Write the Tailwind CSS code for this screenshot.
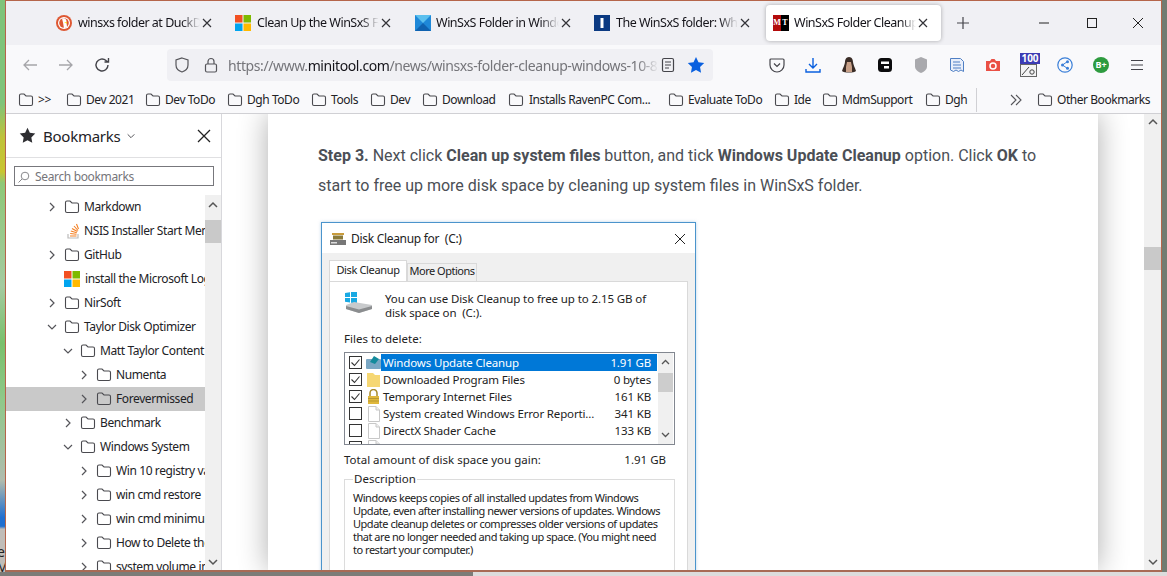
<!DOCTYPE html>
<html lang="en">
  <head>
    <meta charset="UTF-8" />
    <title>WinSxS Folder Cleanup</title>
    <script src="https://cdn.jsdelivr.net/npm/@tailwindcss/browser@4"></script>
  </head>
  <body class="h-screen overflow-hidden bg-[#8a8f88] font-['Noto_Sans',sans-serif] text-[12px] text-[#15141a]">
    <svg class="hidden">
      <symbol id="folder" viewBox="0 0 16 16"><path d="M1.500 3.500a1.500 1.500 0 0 1 1.500-1.500h3l2 2h5a1.500 1.500 0 0 1 1.500 1.500v6.500a1.500 1.500 0 0 1-1.500 1.500h-10a1.500 1.500 0 0 1-1.500-1.500z" fill="none" stroke="#4a4a4f" stroke-width="1.100"/></symbol>
      <symbol id="right" viewBox="0 0 12 12"><path d="M4 2l4 4-4 4" fill="none" stroke="#55555a" stroke-width="1.200"/></symbol>
      <symbol id="down" viewBox="0 0 12 12"><path d="M2 4l4 4 4-4" fill="none" stroke="#55555a" stroke-width="1.200"/></symbol>
      <symbol id="close" viewBox="0 0 12 12"><path d="M2 2l8 8M10 2l-8 8" fill="none" stroke="#333338" stroke-width="1.200"/></symbol>
      <symbol id="ms" viewBox="0 0 16 16"><rect width="7.500" height="7.500" fill="#f25022"/><rect x="8.500" width="7.500" height="7.500" fill="#7fba00"/><rect y="8.500" width="7.500" height="7.500" fill="#00a4ef"/><rect x="8.500" y="8.500" width="7.500" height="7.500" fill="#ffb900"/></symbol>
      <symbol id="check" viewBox="0 0 13 13"><rect x=".5" y=".5" width="12" height="12" fill="#fff" stroke="#333"/><path d="M2.500 6.500l3 3 5-6" fill="none" stroke="#333" stroke-width="1.100"/></symbol>
      <symbol id="uncheck" viewBox="0 0 13 13"><rect x=".5" y=".5" width="12" height="12" fill="#fff" stroke="#333"/></symbol>
      <symbol id="page" viewBox="0 0 14 16"><path d="M1.500.5h7.500l3.500 3.500v11.500h-11z" fill="#fff" stroke="#c8c8c8"/><path d="M9 .5v3.500h3.500" fill="#eee" stroke="#c8c8c8"/></symbol>
    </svg>

    <div class="flex h-[572px]">
      <!-- desktop showing behind the browser -->
      <div class="relative w-[5px] shrink-0 overflow-hidden bg-[linear-gradient(180deg,#7fc47a_0,#7fc47a_18%,#bfc23a_24%,#c9c530_30%,#8ec878_32%,#a4cba0_50%,#79c06c_60%,#8fc98a_70%,#b0bcae_84%,#1f6fd0_90.5%,#1f6fd0_92%,#c0bdb8_92.5%,#c0bdb8_100%)] text-[14px] text-[#222]">
        <span class="absolute top-[541px] -left-[3px]">e</span>
        <span class="absolute top-[556px] -left-[4px]">M</span>
      </div>

      <div class="flex min-w-0 flex-1 flex-col border border-b-2 border-[#b5654a] border-b-[#a86a55] bg-white">
        <!-- tab strip -->
        <div class="flex h-[44px] shrink-0 items-center bg-[#f0f0f4] pl-[42px]">
          <div class="flex h-[36px] w-[179px] shrink-0 items-center pl-[8px]">
            <svg class="h-4 w-4 shrink-0" viewBox="0 0 16 16"><circle cx="8" cy="8" r="8" fill="#de5833"/><circle cx="8" cy="8" r="6" fill="#fff"/><circle cx="8" cy="8" r="4.800" fill="#de5833"/><path d="M6 3.500c3-1 5 1 4.500 4l.5 4.500-3 1.500-1-6z" fill="#fff"/><path d="M8 7.500l3-.5v1.500z" fill="#fd0"/></svg>
            <span class="ml-[6px] w-[122px] overflow-hidden pt-px text-[12.5px] tracking-[-0.5px] whitespace-nowrap [mask-image:linear-gradient(90deg,#000_85%,transparent)]">winsxs folder at DuckDuckGo</span>
            <svg class="ml-[1px] h-3 w-3 shrink-0"><use href="#close"/></svg>
          </div>
          <div class="flex h-[36px] w-[179px] shrink-0 items-center pl-[8px]">
            <svg class="h-4 w-4 shrink-0"><use href="#ms"/></svg>
            <span class="ml-[6px] w-[122px] overflow-hidden pt-px text-[12.5px] tracking-[-0.5px] whitespace-nowrap [mask-image:linear-gradient(90deg,#000_85%,transparent)]">Clean Up the WinSxS Folder</span>
            <svg class="ml-[1px] h-3 w-3 shrink-0"><use href="#close"/></svg>
          </div>
          <div class="ml-[1px] flex h-[36px] w-[179px] shrink-0 items-center pl-[8px]">
            <svg class="h-4 w-4 shrink-0" viewBox="0 0 16 16"><rect width="16" height="16" fill="#1e88d8"/><path d="M0 0l8 8 8-8z" fill="#5cc0ee"/><path d="M0 16l8-8 8 8z" fill="#0f62b0"/></svg>
            <span class="ml-[5px] w-[123px] overflow-hidden pt-px text-[12.5px] tracking-[-0.5px] whitespace-nowrap [mask-image:linear-gradient(90deg,#000_85%,transparent)]">WinSxS Folder in Windows</span>
            <svg class="ml-[1px] h-3 w-3 shrink-0"><use href="#close"/></svg>
          </div>
          <div class="flex h-[36px] w-[179px] shrink-0 items-center pl-[8px]">
            <svg class="h-4 w-4 shrink-0" viewBox="0 0 16 16"><rect width="16" height="16" fill="#0b3a82"/><rect x="6.500" y="3" width="3" height="10" fill="#fff"/></svg>
            <span class="ml-[6px] w-[122px] overflow-hidden pt-px text-[12.5px] tracking-[-0.5px] whitespace-nowrap [mask-image:linear-gradient(90deg,#000_85%,transparent)]">The WinSxS folder: What is it</span>
            <svg class="ml-[1px] h-3 w-3 shrink-0"><use href="#close"/></svg>
          </div>
          <div class="ml-[1px] flex h-[36px] w-[175px] shrink-0 items-center rounded-[4px] bg-white pl-[7px] shadow-[0_0_4px_rgba(0,0,0,0.3)]">
            <div class="flex h-4 w-4 shrink-0 font-['Liberation_Serif',serif] text-[8px] leading-4 font-bold text-white">
              <span class="w-1/2 bg-[#b30b0b] text-center">M</span><span class="w-1/2 bg-black text-center">T</span>
            </div>
            <span class="ml-[5px] w-[122px] overflow-hidden pt-px text-[12.5px] tracking-[-0.5px] whitespace-nowrap [mask-image:linear-gradient(90deg,#000_88%,transparent)]">WinSxS Folder Cleanup in Windows</span>
            <svg class="ml-[1px] h-3 w-3 shrink-0"><use href="#close"/></svg>
          </div>
          <svg class="ml-[15px] h-[14px] w-[14px] shrink-0" viewBox="0 0 14 14"><path d="M7 1v12M1 7h12" stroke="#44444a" stroke-width="1.200"/></svg>
          <svg class="ml-[68px] h-[12px] w-[12px] shrink-0" viewBox="0 0 12 12"><path d="M1 6h10" stroke="#222" stroke-width="1"/></svg>
          <svg class="ml-[36px] h-[12px] w-[12px] shrink-0" viewBox="0 0 12 12"><rect x="1.500" y="1.500" width="9" height="9" fill="none" stroke="#222" stroke-width="1"/></svg>
          <svg class="ml-[34px] h-[12px] w-[12px] shrink-0" viewBox="0 0 12 12"><path d="M1 1l10 10M11 1l-10 10" stroke="#222" stroke-width="1"/></svg>
        </div>

        <!-- nav toolbar -->
        <div class="flex h-[40px] shrink-0 items-center bg-[#f9f9fb]">
          <div class="flex w-[161px] shrink-0 items-center pl-[16px]">
            <svg class="h-4 w-4" viewBox="0 0 16 16"><path d="M15 8H2M7 3L2 8l5 5" fill="none" stroke="#a5a5a9" stroke-width="1.300"/></svg>
            <svg class="ml-[20px] h-4 w-4" viewBox="0 0 16 16"><path d="M1 8h13M9 3l5 5-5 5" fill="none" stroke="#a5a5a9" stroke-width="1.300"/></svg>
            <svg class="ml-[20px] h-4 w-4" viewBox="0 0 16 16"><path d="M14 8a6 6 0 1 1-2-4.500l2 1.500M14.500 1v4h-4" fill="none" stroke="#44444a" stroke-width="1.400"/></svg>
          </div>
          <div class="flex h-[32px] w-[546px] shrink-0 items-center rounded-[4px] bg-[#f0f0f4] pl-[7px]">
            <svg class="h-4 w-4 shrink-0" viewBox="0 0 16 16"><path d="M8 1l6 2v5c0 3.500-3 6-6 7-3-1-6-3.500-6-7V3z" fill="none" stroke="#55555a" stroke-width="1.200"/></svg>
            <svg class="ml-[13px] h-4 w-4 shrink-0" viewBox="0 0 16 16"><rect x="2.500" y="7" width="11" height="8" rx="1.500" fill="none" stroke="#55555a" stroke-width="1.200"/><path d="M5 7V4.500a3 3 0 0 1 6 0V7" fill="none" stroke="#55555a" stroke-width="1.200"/></svg>
            <span class="ml-[9px] w-[431px] shrink-0 overflow-hidden text-[14px] tracking-[-0.4px] whitespace-nowrap text-[#75757a] [mask-image:linear-gradient(90deg,#000_95%,transparent)]">https://www.<span class="text-[#15141a]">minitool.com</span>/news/winsxs-folder-cleanup-windows-10-8.html</span>
            <svg class="ml-[1px] h-4 w-4 shrink-0" viewBox="0 0 16 16"><rect x="2.500" y="1.500" width="11" height="13" rx="1.500" fill="none" stroke="#44444a" stroke-width="1.200"/><path d="M5 5h6M5 8h6M5 11h4" stroke="#44444a"/></svg>
            <svg class="ml-[11px] h-[18px] w-[18px] shrink-0" viewBox="0 0 16 16"><path d="M8 .8l2.200 4.700 5.100.7-3.700 3.600.9 5.100L8 12.500l-4.500 2.400.9-5.100L.7 6.200l5.100-.7z" fill="#0a60df"/></svg>
          </div>
          <div class="ml-[56px] flex shrink-0 items-center">
            <svg class="h-4 w-4" viewBox="0 0 16 16"><path d="M2 2h12a1 1 0 0 1 1 1v5a7 7 0 0 1-14 0V3a1 1 0 0 1 1-1z" fill="none" stroke="#44444a" stroke-width="1.200"/><path d="M5 6.500l3 3 3-3" fill="none" stroke="#44444a" stroke-width="1.200"/></svg>
            <svg class="ml-[20px] h-4 w-4" viewBox="0 0 16 16"><path d="M8 1v10M4 7l4 4 4-4M1 12v3h14v-3" fill="none" stroke="#0a60df" stroke-width="1.400"/></svg>
            <svg class="ml-[20px] h-4 w-4" viewBox="0 0 16 16"><path d="M8 0c3 0 4 3 4 5s2 6 3 9c-2 2-12 2-14 0 1-3 3-7 3-9s1-5 4-5z" fill="#3a2c26"/><path d="M6 5h4l1 5v5H5v-5z" fill="#c8a088"/></svg>
            <svg class="ml-[20px] h-4 w-4" viewBox="0 0 16 16"><rect x="1" y="1" width="14" height="14" rx="3.500" fill="#0c0c0d"/><rect x="4" y="4.500" width="8" height="2.500" fill="#fff"/><rect x="7" y="9" width="5" height="2.500" fill="#fff"/></svg>
            <svg class="ml-[20px] h-[18px] w-4" viewBox="0 0 16 18"><path d="M8 1l6 2.500v7c0 3-3 5.500-6 6.500-3-1-6-3.500-6-6.500v-7z" fill="#a9a9ad"/></svg>
            <svg class="ml-[20px] h-4 w-4" viewBox="0 0 16 16"><path d="M1.500 1.500h10l3 3v10l-2.500-1.500-2.500 1.500-2.500-1.500-2.500 1.500-3-1.500z" fill="#e8eefa" stroke="#4f7fc4" stroke-width="1"/><path d="M4 5h7M4 8h8M4 11h8" stroke="#4f7fc4"/></svg>
            <svg class="ml-[20px] h-4 w-4" viewBox="0 0 16 16"><path d="M1 4h4l1.500-2h3L11 4h4v10H1z" fill="#ea5045"/><circle cx="8" cy="9" r="3" fill="none" stroke="#fff" stroke-width="1.500"/></svg>
            <div class="ml-[19px] flex h-[24px] w-[20px] flex-col">
              <span class="h-[11px] bg-[#3c3cb4] text-center text-[10px] leading-[11px] font-bold text-white">100</span>
              <svg class="h-[13px] w-[20px]" viewBox="0 0 20 13"><rect x=".5" y=".5" width="16" height="12" fill="#f4f4f4" stroke="#666"/><path d="M2 11L9 3" stroke="#444"/><circle cx="12" cy="8" r="2.200" fill="none" stroke="#444"/></svg>
            </div>
            <svg class="ml-[17px] h-4 w-4" viewBox="0 0 16 16"><circle cx="8" cy="8" r="7.200" fill="none" stroke="#3a7fd8" stroke-width="1.200"/><path d="M10.500 4.500L5.500 8l5 3.500" fill="none" stroke="#3a7fd8"/><circle cx="10.500" cy="4.800" r="1.500" fill="#3a7fd8"/><circle cx="5.500" cy="8" r="1.500" fill="#3a7fd8"/><circle cx="10.500" cy="11.200" r="1.500" fill="#3a7fd8"/></svg>
            <div class="ml-[20px] h-4 w-4 rounded-full bg-[#2e9b3f] text-center text-[9px] leading-4 font-bold text-white">B+</div>
            <svg class="ml-[20px] h-4 w-4" viewBox="0 0 16 16"><path d="M2 3.500h12M2 8h12M2 12.500h12" stroke="#44444a" stroke-width="1.200"/></svg>
          </div>
        </div>

        <!-- bookmarks bar -->
        <div class="flex h-[29px] shrink-0 items-center border-b border-[#d0d0d4] bg-[#f9f9fb] pt-px pl-[12px] text-[12px] tracking-[-0.45px] whitespace-nowrap text-[#222226]">
          <div class="flex w-[48px] shrink-0 items-center gap-[4px]"><svg class="h-4 w-4 shrink-0"><use href="#folder"/></svg>&gt;&gt;</div>
          <div class="flex w-[79px] shrink-0 items-center gap-[4px]"><svg class="h-4 w-4 shrink-0"><use href="#folder"/></svg>Dev 2021</div>
          <div class="flex w-[82px] shrink-0 items-center gap-[4px]"><svg class="h-4 w-4 shrink-0"><use href="#folder"/></svg>Dev ToDo</div>
          <div class="flex w-[84px] shrink-0 items-center gap-[4px]"><svg class="h-4 w-4 shrink-0"><use href="#folder"/></svg>Dgh ToDo</div>
          <div class="flex w-[59px] shrink-0 items-center gap-[4px]"><svg class="h-4 w-4 shrink-0"><use href="#folder"/></svg>Tools</div>
          <div class="flex w-[52px] shrink-0 items-center gap-[4px]"><svg class="h-4 w-4 shrink-0"><use href="#folder"/></svg>Dev</div>
          <div class="flex w-[86px] shrink-0 items-center gap-[4px]"><svg class="h-4 w-4 shrink-0"><use href="#folder"/></svg>Download</div>
          <div class="flex w-[160px] shrink-0 items-center gap-[5px]"><svg class="h-4 w-4 shrink-0"><use href="#folder"/></svg>Installs RavenPC Com...</div>
          <div class="flex w-[106px] shrink-0 items-center gap-[4px]"><svg class="h-4 w-4 shrink-0"><use href="#folder"/></svg>Evaluate ToDo</div>
          <div class="flex w-[48px] shrink-0 items-center gap-[4px]"><svg class="h-4 w-4 shrink-0"><use href="#folder"/></svg>Ide</div>
          <div class="flex w-[103px] shrink-0 items-center gap-[4px]"><svg class="h-4 w-4 shrink-0"><use href="#folder"/></svg>MdmSupport</div>
          <div class="flex w-[51px] shrink-0 items-center gap-[4px]"><svg class="h-4 w-4 shrink-0"><use href="#folder"/></svg>Dgh</div>
          <div class="h-[24px] w-px shrink-0 bg-[#d0d0d4]"></div>
          <svg class="ml-[32px] h-[14px] w-[14px] shrink-0" viewBox="0 0 14 14"><path d="M2 2l5 5-5 5M7 2l5 5-5 5" fill="none" stroke="#55555a" stroke-width="1.100"/></svg>
          <div class="ml-[14px] flex shrink-0 items-center gap-[4px]"><svg class="h-4 w-4 shrink-0"><use href="#folder"/></svg>Other Bookmarks</div>
        </div>

        <div class="flex min-h-0 flex-1">
          <!-- bookmarks sidebar -->
          <aside class="flex w-[216px] shrink-0 flex-col border-r border-[#d8d8dc] bg-white">
            <div class="flex h-[44px] shrink-0 items-center border-b border-[#e0e0e2] pl-[13px]">
              <svg class="h-[17px] w-[17px] shrink-0" viewBox="0 0 16 16"><path d="M8 .8l2.200 4.700 5.100.7-3.700 3.600.9 5.100L8 12.500l-4.500 2.400.9-5.100L.7 6.200l5.100-.7z" fill="#2e2e32"/></svg>
              <span class="ml-[7px] w-[78px] pt-px text-[15px] tracking-[-0.25px] text-[#222226]">Bookmarks</span>
              <svg class="ml-[5px] h-[10px] w-[10px] shrink-0" viewBox="0 0 12 12"><path d="M2 4l4 4 4-4" fill="none" stroke="#55555a" stroke-width="1.200"/></svg>
              <svg class="ml-[61px] h-[14px] w-[14px] shrink-0" viewBox="0 0 14 14"><path d="M1 1l12 12M13 1L1 13" stroke="#222" stroke-width="1.300"/></svg>
            </div>
            <div class="mx-[8px] mt-[8px] flex h-[20px] w-[200px] shrink-0 items-center border border-[#77777c] pt-px pl-[3px] text-[12px] tracking-[-0.35px] text-[#75757a]">
              <svg class="mr-[5px] h-[12px] w-[12px] shrink-0 -scale-x-100" viewBox="0 0 12 12"><circle cx="5" cy="5" r="3.800" fill="none" stroke="#88888c"/><path d="M8 8l3.500 3.500" stroke="#88888c"/></svg>
              Search bookmarks
            </div>
            <div class="mt-[9px] flex min-h-0 flex-1 overflow-hidden">
              <div class="w-[199px] shrink-0 overflow-hidden text-[12px] tracking-[-0.4px] whitespace-nowrap text-[#222226] [&>div]:flex [&>div]:h-[24px] [&>div]:items-center">
                <div class="pl-[40px]"><svg class="mr-[6px] h-3 w-3 shrink-0"><use href="#right"/></svg><svg class="h-4 w-4 shrink-0"><use href="#folder"/></svg><span class="ml-[4px]">Markdown</span></div>
                <div class="pl-[59px]"><svg class="h-4 w-4 shrink-0" viewBox="0 0 16 16"><path d="M3 11v4h10v-4" fill="none" stroke="#bcbbbb" stroke-width="1.200"/><path d="M5 13h6.500M5.200 10.500l6.300.8M5.800 8l6 1.700M7 5.500l5.400 3M9 3l4 4.500M11.500 1l2 5" stroke="#f48024" stroke-width="1.100"/></svg><span class="ml-[3px]">NSIS Installer Start Menu</span></div>
                <div class="pl-[40px]"><svg class="mr-[6px] h-3 w-3 shrink-0"><use href="#right"/></svg><svg class="h-4 w-4 shrink-0"><use href="#folder"/></svg><span class="ml-[4px]">GitHub</span></div>
                <div class="pl-[58px]"><svg class="h-4 w-4 shrink-0"><use href="#ms"/></svg><span class="ml-[5px]">install the Microsoft Log</span></div>
                <div class="pl-[40px]"><svg class="mr-[6px] h-3 w-3 shrink-0"><use href="#right"/></svg><svg class="h-4 w-4 shrink-0"><use href="#folder"/></svg><span class="ml-[4px]">NirSoft</span></div>
                <div class="pl-[40px]"><svg class="mr-[6px] h-3 w-3 shrink-0"><use href="#down"/></svg><svg class="h-4 w-4 shrink-0"><use href="#folder"/></svg><span class="ml-[4px]">Taylor Disk Optimizer</span></div>
                <div class="pl-[56px]"><svg class="mr-[6px] h-3 w-3 shrink-0"><use href="#down"/></svg><svg class="h-4 w-4 shrink-0"><use href="#folder"/></svg><span class="ml-[4px]">Matt Taylor Content</span></div>
                <div class="pl-[72px]"><svg class="mr-[6px] h-3 w-3 shrink-0"><use href="#right"/></svg><svg class="h-4 w-4 shrink-0"><use href="#folder"/></svg><span class="ml-[4px]">Numenta</span></div>
                <div class="bg-[#c9c9c9] pl-[72px]"><svg class="mr-[6px] h-3 w-3 shrink-0"><use href="#right"/></svg><svg class="h-4 w-4 shrink-0"><use href="#folder"/></svg><span class="ml-[4px]">Forevermissed</span></div>
                <div class="pl-[56px]"><svg class="mr-[6px] h-3 w-3 shrink-0"><use href="#right"/></svg><svg class="h-4 w-4 shrink-0"><use href="#folder"/></svg><span class="ml-[4px]">Benchmark</span></div>
                <div class="pl-[56px]"><svg class="mr-[6px] h-3 w-3 shrink-0"><use href="#down"/></svg><svg class="h-4 w-4 shrink-0"><use href="#folder"/></svg><span class="ml-[4px]">Windows System</span></div>
                <div class="pl-[72px]"><svg class="mr-[6px] h-3 w-3 shrink-0"><use href="#right"/></svg><svg class="h-4 w-4 shrink-0"><use href="#folder"/></svg><span class="ml-[4px]">Win 10 registry values</span></div>
                <div class="pl-[72px]"><svg class="mr-[6px] h-3 w-3 shrink-0"><use href="#right"/></svg><svg class="h-4 w-4 shrink-0"><use href="#folder"/></svg><span class="ml-[4px]">win cmd restore</span></div>
                <div class="pl-[72px]"><svg class="mr-[6px] h-3 w-3 shrink-0"><use href="#right"/></svg><svg class="h-4 w-4 shrink-0"><use href="#folder"/></svg><span class="ml-[4px]">win cmd minimum</span></div>
                <div class="pl-[72px]"><svg class="mr-[6px] h-3 w-3 shrink-0"><use href="#right"/></svg><svg class="h-4 w-4 shrink-0"><use href="#folder"/></svg><span class="ml-[4px]">How to Delete the</span></div>
                <div class="pl-[72px]"><svg class="mr-[6px] h-3 w-3 shrink-0"><use href="#right"/></svg><svg class="h-4 w-4 shrink-0"><use href="#folder"/></svg><span class="ml-[4px]">system volume info</span></div>
              </div>
              <div class="flex w-[16px] shrink-0 flex-col bg-[#f0f0f0]">
                <svg class="mx-auto mt-[6px] h-[8px] w-[10px] shrink-0" viewBox="0 0 10 8"><path d="M1 6l4-4 4 4" fill="none" stroke="#555" stroke-width="1.500"/></svg>
                <div class="mt-[11px] h-[23px] shrink-0 bg-[#c9c9c9]"></div>
                <svg class="mx-auto mt-auto mb-[4px] h-[8px] w-[10px] shrink-0" viewBox="0 0 10 8"><path d="M1 2l4 4 4-4" fill="none" stroke="#555" stroke-width="1.500"/></svg>
              </div>
            </div>
          </aside>

          <!-- page content -->
          <main class="flex min-w-0 flex-1 overflow-hidden bg-white">
            <div class="ml-[46px] w-[830px] shrink-0 bg-white pt-[27px] pl-[50px] font-['Roboto',sans-serif] text-[16px] leading-[30px] text-[#4b4f56] shadow-[0_0_28px_rgba(0,0,0,0.32)]">
              <p class="w-[740px]"><strong>Step 3.</strong> Next click <strong>Clean up system files</strong> button, and tick <strong>Windows Update Cleanup</strong> option. Click <strong>OK</strong> to start to free up more disk space by cleaning up system files in WinSxS folder.</p>

              <!-- Disk Cleanup dialog screenshot -->
              <div class="mt-[21px] ml-[3px] flex h-[400px] w-[375px] flex-col border border-[#4b94cc] bg-[#f0f0f0] font-['Noto_Sans',sans-serif] text-[11.5px] leading-[14px] text-[#222] shadow-[0_0_3px_rgba(120,170,210,0.5)]">
                <div class="flex h-[30px] shrink-0 items-center bg-white pt-[2px] pl-[8px] text-[12px] tracking-[-0.3px]">
                  <svg class="h-[14px] w-[16px] shrink-0" viewBox="0 0 16 14"><rect x="2" y="1" width="12" height="2" fill="#c89b3c"/><rect x="3" y="3.500" width="10" height="4" fill="#8a7a3a"/><rect y="8" width="16" height="5" fill="#777"/><rect x="1" y="10" width="6" height="1.500" fill="#ddd"/></svg>
                  <span class="ml-[5px]">Disk Cleanup for&nbsp; (C:)</span>
                  <svg class="mr-[9px] ml-auto h-3 w-3 shrink-0" viewBox="0 0 12 12"><path d="M1 1l10 10M11 1l-10 10" stroke="#222" stroke-width="1"/></svg>
                </div>
                <div class="mt-[8px] flex h-[20px] shrink-0 items-end pl-[7px] text-[11px] tracking-[-0.35px] whitespace-nowrap">
                  <div class="z-10 h-[21px] w-[78px] border border-b-0 border-[#d9d9d9] bg-white pt-[2px] text-center">Disk Cleanup</div>
                  <div class="h-[18px] w-[70px] border border-b-0 border-[#d9d9d9] bg-[#f0f0f0] text-center leading-[14px] tracking-[-0.5px]">More Options</div>
                </div>
                <div class="ml-[7px] w-[359px] flex-1 border border-[#d9d9d9] bg-white pl-[14px]">
                  <div class="flex items-start pt-[10px]">
                    <svg class="h-[22px] w-[30px] shrink-0" viewBox="0 0 30 22"><path d="M1 1l5-.8V5H1zM7 0l6-1V5H7zM1 6h5v4.500L1 9.800zM7 6h6v5.500l-6-.8z" fill="#19a9e3"/><path d="M2 13l8-3 18 3v4l-13 4-13-4z" fill="#c8cacc"/><path d="M2 14l13 3.500 13-3.500v3l-13 4-13-4z" fill="#8b8d8f"/></svg>
                    <p class="ml-[11px] w-[285px] tracking-[-0.1px]">You can use Disk Cleanup to free up to 2.15 GB of disk space on&nbsp; (C:).</p>
                  </div>
                  <p class="mt-[12px]">Files to delete:</p>
                  <div class="mt-[6px] flex h-[93px] w-[331px] overflow-hidden border border-[#828790]">
                    <div class="flex-1 pt-px pl-[4px] tracking-[-0.15px] [&>div]:flex [&>div]:h-[17px] [&>div]:items-center">
                      <div><svg class="h-[13px] w-[13px] shrink-0"><use href="#check"/></svg><svg class="ml-[4px] h-[15px] w-[15px] shrink-0" viewBox="0 0 15 15"><rect y="4" width="15" height="10" rx="1" fill="#7aa7c4"/><path d="M4 7l4-6 5 3-4 5z" fill="#138a9c"/></svg><div class="flex h-[17px] flex-1 items-center justify-between bg-[#0078d7] pr-[6px] pl-[2px] text-white"><span>Windows Update Cleanup</span><span>1.91 GB</span></div></div>
                      <div><svg class="h-[13px] w-[13px] shrink-0"><use href="#check"/></svg><svg class="ml-[4px] h-[15px] w-[15px] shrink-0" viewBox="0 0 15 15"><path d="M1 1h6l2 2h5v12H1z" fill="#f6d773"/></svg><div class="flex h-[17px] flex-1 items-center justify-between pr-[6px] pl-[2px]"><span>Downloaded Program Files</span><span>0 bytes</span></div></div>
                      <div><svg class="h-[13px] w-[13px] shrink-0"><use href="#check"/></svg><svg class="ml-[4px] h-[15px] w-[15px] shrink-0" viewBox="0 0 15 15"><path d="M4 7V4a3.500 3.500 0 0 1 7 0v3" fill="none" stroke="#a88a2a" stroke-width="1.500"/><rect x="2" y="7" width="11" height="8" fill="#e0b83c"/><path d="M2 9.500h11M2 12h11" stroke="#a88a2a" stroke-width=".7"/></svg><div class="flex h-[17px] flex-1 items-center justify-between pr-[6px] pl-[2px]"><span>Temporary Internet Files</span><span>161 KB</span></div></div>
                      <div><svg class="h-[13px] w-[13px] shrink-0"><use href="#uncheck"/></svg><svg class="ml-[5px] h-[16px] w-[14px] shrink-0"><use href="#page"/></svg><div class="flex h-[17px] flex-1 items-center justify-between pr-[6px] pl-[2px]"><span>System created Windows Error Reporti...</span><span>341 KB</span></div></div>
                      <div><svg class="h-[13px] w-[13px] shrink-0"><use href="#uncheck"/></svg><svg class="ml-[5px] h-[16px] w-[14px] shrink-0"><use href="#page"/></svg><div class="flex h-[17px] flex-1 items-center justify-between pr-[6px] pl-[2px]"><span>DirectX Shader Cache</span><span>133 KB</span></div></div>
                      <div><svg class="h-[13px] w-[13px] shrink-0"><use href="#uncheck"/></svg><svg class="ml-[5px] h-[16px] w-[14px] shrink-0"><use href="#page"/></svg></div>
                    </div>
                    <div class="mr-px ml-px flex w-[15px] shrink-0 flex-col bg-[#f0f0f0]">
                      <svg class="mx-auto mt-[6px] h-[6px] w-[9px] shrink-0" viewBox="0 0 9 6"><path d="M1 5l3.500-3.500L8 5" fill="none" stroke="#555" stroke-width="1.300"/></svg>
                      <div class="mt-[8px] h-[19px] shrink-0 bg-[#cdcdcd]"></div>
                      <svg class="mx-auto mt-auto mb-[6px] h-[6px] w-[9px] shrink-0" viewBox="0 0 9 6"><path d="M1 1l3.500 3.500L8 1" fill="none" stroke="#555" stroke-width="1.300"/></svg>
                    </div>
                  </div>
                  <div class="mt-[8px] flex w-[322px] justify-between"><span>Total amount of disk space you gain:</span><span>1.91 GB</span></div>
                  <fieldset class="mt-[5px] h-[120px] w-[331px] border border-[#dcdcdc] pr-[4px] pl-[8px]">
                    <legend class="px-[1px]">Description</legend>
                    <p class="mt-[5px] text-[11px] leading-[13px] tracking-[-0.48px] whitespace-nowrap">Windows keeps copies of all installed updates from Windows<br />Update, even after installing newer versions of updates. Windows<br />Update cleanup deletes or compresses older versions of updates<br />that are no longer needed and taking up space. (You might need<br />to restart your computer.)</p>
                  </fieldset>
                </div>
              </div>
            </div>
            <div class="ml-auto flex w-[17px] shrink-0 flex-col bg-[#f0f0f0]">
              <svg class="mx-auto mt-[4px] h-[8px] w-[10px] shrink-0" viewBox="0 0 10 8"><path d="M1 6l4-4 4 4" fill="none" stroke="#555" stroke-width="1.500"/></svg>
              <div class="mt-[121px] h-[23px] shrink-0 bg-[#c9c9c9]"></div>
              <svg class="mx-auto mt-auto mb-[4px] h-[8px] w-[10px] shrink-0" viewBox="0 0 10 8"><path d="M1 2l4 4 4-4" fill="none" stroke="#555" stroke-width="1.500"/></svg>
            </div>
          </main>
        </div>
      </div>

      <div class="w-[5px] shrink-0 bg-[#727c72]"></div>
    </div>
    <div class="flex h-[4px]">
      <div class="w-[473px] bg-[#7c7c78]"></div>
      <div class="flex-1 bg-[#dcdcdc]"></div>
    </div>
  </body>
</html>
